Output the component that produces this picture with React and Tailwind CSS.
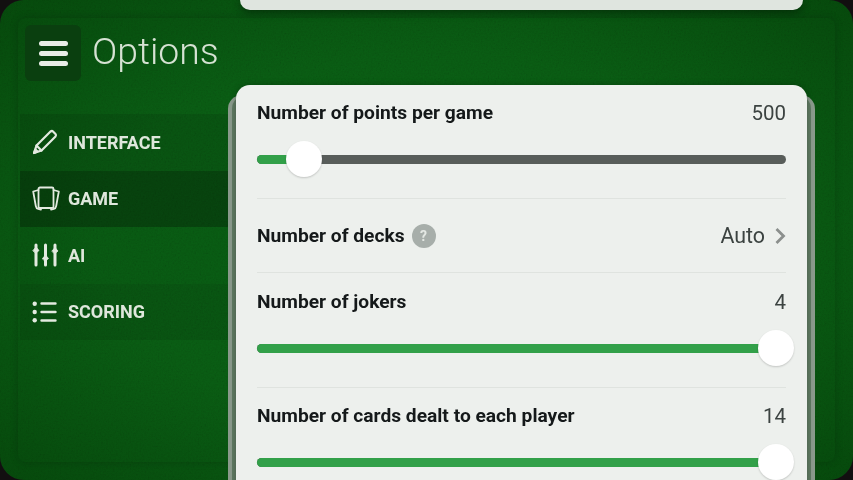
import React from "react";

const font = { fontFamily: "Roboto, sans-serif" };

function PencilIcon() {
  return (
    <svg width="26" height="26" viewBox="0 0 26 26" fill="none" stroke="#e3eae0" strokeWidth="2.2" strokeLinejoin="round" strokeLinecap="round">
      <path d="M2 24 L4.5 16.5 L18.5 2.5 Q20 1.5 21 2.5 L23.5 5 Q24.5 6 23.5 7.5 L9.5 21.5 Z" />
      <path d="M4.5 16.5 L9.5 21.5" />
      <path d="M2 24 L5.5 22.5 L3.5 20.5 Z" fill="#e3eae0" />
    </svg>
  );
}

function CardsIcon() {
  return (
    <svg width="28" height="26" viewBox="0 0 28 26" fill="none" stroke="#e3eae0" strokeWidth="1.8" strokeLinejoin="round" strokeLinecap="round">
      <rect x="6.5" y="1.5" width="15" height="20.5" rx="1.5" />
      <path d="M6.5 4 L1.2 5.5 L3.8 20 Q4.2 22.3 6.2 22.8 L9 23.6" />
      <path d="M21.5 4 L26.8 5.5 L24.2 20 Q23.8 22.3 21.8 22.8 L19 23.6" />
    </svg>
  );
}

function SlidersIcon() {
  return (
    <svg width="28" height="24" viewBox="0 0 28 24" fill="#e3eae0" stroke="#e3eae0" strokeWidth="3" strokeLinecap="round">
      <path d="M4 2 V22 M13.5 2 V22 M23 2 V22" />
      <path d="M1 7.5 L4 4 L7 7.5 L4 10 Z" strokeWidth="0.8" />
      <path d="M10.5 15.5 L13.5 12 L16.5 15.5 L13.5 18 Z" strokeWidth="0.8" />
      <path d="M20 8 L23 4.5 L26 8 L23 10.5 Z" strokeWidth="0.8" />
    </svg>
  );
}

function ListIcon() {
  return (
    <svg width="26" height="22" viewBox="0 0 26 22" fill="#e3eae0" stroke="#e3eae0" strokeLinecap="round">
      <circle cx="2.7" cy="2.7" r="2.2" stroke="none" />
      <circle cx="2.7" cy="11" r="2.2" stroke="none" />
      <circle cx="2.7" cy="19.3" r="2.2" stroke="none" />
      <path d="M9.5 2.5 H23.5 M9.5 11 H23.5 M9.5 19.5 H23.5" strokeWidth="2.4" fill="none" />
    </svg>
  );
}

function Nav({ icon, label, className }) {
  return (
    <div className={`flex h-[56.5px] items-center pl-[12px] ${className}`}>
      <div className="flex w-[36px] items-center">{icon}</div>
      <span className="text-[18px] font-bold text-[#dfe7dc]">{label}</span>
    </div>
  );
}

function Slider({ label, value, pct, top }) {
  return (
    <div className={`px-[21px] ${top}`}>
      <div className="flex items-center justify-between">
        <span className="text-[19.2px] leading-[24px] font-bold text-[#15191a]">{label}</span>
        <span className="text-[20.5px] leading-[24px] text-[#3c4341]">{value}</span>
      </div>
      <div className="relative mt-[30px] mb-[34px] flex h-[9px] rounded-full bg-[#585d5a]">
        <div className="h-full rounded-full bg-[#32a049]" style={{ width: pct + "%" }} />
        <div
          className="absolute top-[-14px] h-[36px] w-[36px] -translate-x-1/2 rounded-full bg-white shadow-[0_1px_2px_rgba(0,0,0,0.18)]"
          style={{ left: pct + "%" }}
        />
      </div>
    </div>
  );
}

export default function App() {
  return (
    <div className="h-[480px] w-[853px] overflow-hidden bg-[#120f10]" style={font}>
      <div className="relative h-[480px] overflow-hidden rounded-[24px] bg-[radial-gradient(ellipse_at_center,#0a6716_0%,#0a6014_55%,#064c0c_100%)] p-[18px]">
        <svg className="pointer-events-none absolute inset-0 h-full w-full opacity-[0.4] mix-blend-multiply" aria-hidden="true">
          <filter id="felt">
            <feTurbulence type="fractalNoise" baseFrequency="0.6" numOctaves="2" stitchTiles="stitch" />
            <feColorMatrix type="saturate" values="0" />
          </filter>
          <rect width="100%" height="100%" filter="url(#felt)" />
        </svg>
        <div className="relative flex h-[444px] rounded-[8px] shadow-[0_0_8px_rgba(0,0,0,0.2)]">
          <div className="w-[210px] shrink-0 pl-[2px]">
            <div className="flex h-[96px] items-start pt-[7px] pl-[5px]">
              <div className="flex h-[56px] w-[56px] flex-col items-center justify-center gap-[5px] rounded-[6px] bg-[#0a3f0f]">
                <div className="h-[5px] w-[29px] rounded-full bg-[#e8ece6]" />
                <div className="h-[5px] w-[29px] rounded-full bg-[#e8ece6]" />
                <div className="h-[5px] w-[29px] rounded-full bg-[#e8ece6]" />
              </div>
              <span className="ml-[11px] text-[37.3px] leading-[52px] font-[350] text-[#d6e2d3]">Options</span>
            </div>
            <Nav icon={<PencilIcon />} label="INTERFACE" className="bg-[#00000018]" />
            <Nav icon={<CardsIcon />} label="GAME" className="bg-[#00000048]" />
            <Nav icon={<SlidersIcon />} label="AI" className="bg-[#00000008]" />
            <Nav icon={<ListIcon />} label="SCORING" className="bg-[#00000018]" />
          </div>
          <div className="-mt-[18px] flex-1">
            <div className="ml-[12px] h-[10px] w-[563px] rounded-b-[14px] bg-[#dfe5df] shadow-[0_2px_8px_rgba(0,0,0,0.45)]" />
            <div className="relative mt-[75px] h-[420px] w-[587px] px-[8px]">
              <div className="absolute inset-x-0 top-[10px] bottom-0 rounded-t-[14px] bg-[#8a9a8c]" />
              <div className="absolute inset-x-[4px] top-[10px] bottom-0 rounded-t-[14px] bg-[#5f7a62]" />
              <div className="relative h-full rounded-t-[14px] bg-[#edf0ed] shadow-[0_0_6px_rgba(0,0,0,0.25)]">
                <Slider label="Number of points per game" value="500" pct={8.9} top="pt-[16px]" />
                <div className="mx-[21px] border-t border-[#dfe3df]" />
                <div className="flex h-[73px] items-center justify-between px-[21px] pt-[2px]">
                  <div className="flex items-center gap-[7px]">
                    <span className="text-[19.2px] font-bold text-[#15191a]">Number of decks</span>
                    <span className="flex h-[24px] w-[24px] items-center justify-center rounded-full bg-[#a7aeaa] text-[14px] font-bold text-[#e4e8e4]">?</span>
                  </div>
                  <div className="flex items-center gap-[9px]">
                    <span className="text-[21.4px] text-[#3c4341]">Auto</span>
                    <svg width="12" height="18" viewBox="0 0 12 18" fill="none" stroke="#8b8f8d" strokeWidth="2.8">
                      <path d="M2.5 2 L9.5 9 L2.5 16" />
                    </svg>
                  </div>
                </div>
                <div className="mx-[21px] border-t border-[#dfe3df]" />
                <Slider label="Number of jokers" value="4" pct={98.1} top="pt-[17px]" />
                <div className="mx-[21px] border-t border-[#dfe3df]" />
                <Slider label="Number of cards dealt to each player" value="14" pct={98.1} top="pt-[16px]" />
              </div>
            </div>
          </div>
        </div>
      </div>
    </div>
  );
}
